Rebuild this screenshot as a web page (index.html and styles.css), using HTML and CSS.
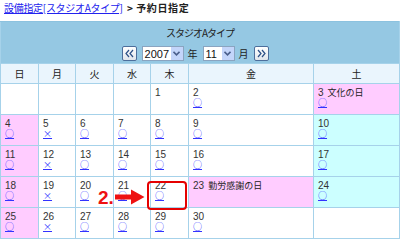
FILE: index.html
```html
<!DOCTYPE html>
<html lang="ja">

<head>
  <meta charset="UTF-8" />
  <title>予約日指定</title>
  <link rel="stylesheet" href="styles.css">
</head>

<body>
  <div class="crumb"><a href="#">設備指定[スタジオAタイプ]</a> <b>&gt; 予約日指定</b></div>

  <div class="cal">
    <table>
      <colgroup>
        <col class="c-sun">
        <col class="c-mon">
        <col class="c-tue">
        <col class="c-wed">
        <col class="c-thu">
        <col class="c-fri">
        <col class="c-sat">
      </colgroup>
      <thead>
        <tr>
          <th colspan="7" class="head">
            <div class="title">スタジオAタイプ</div>
            <div class="nav">
              <span class="btn">
                <svg width="9" height="9" viewBox="0 0 9 9"><path d="M4 1 L1 4.5 L4 8 M8 1 L5 4.5 L8 8" fill="none" stroke="#2b4f86" stroke-width="1.2"/></svg>
              </span>
              <span class="sel sel-year">2007<span class="drop"><svg width="7" height="5" viewBox="0 0 7 5"><path d="M0.5 0.8 L3.5 3.8 L6.5 0.8" fill="none" stroke="#4b5f8c" stroke-width="1.6"/></svg></span></span>
              <span class="unit">年</span>
              <span class="sel sel-month">11<span class="drop"><svg width="7" height="5" viewBox="0 0 7 5"><path d="M0.5 0.8 L3.5 3.8 L6.5 0.8" fill="none" stroke="#4b5f8c" stroke-width="1.6"/></svg></span></span>
              <span class="unit">月</span>
              <span class="btn">
                <svg width="9" height="9" viewBox="0 0 9 9"><path d="M1 1 L4 4.5 L1 8 M5 1 L8 4.5 L5 8" fill="none" stroke="#2b4f86" stroke-width="1.2"/></svg>
              </span>
            </div>
          </th>
        </tr>
        <tr class="dow">
          <th>日</th><th>月</th><th>火</th><th>水</th><th>木</th><th>金</th><th>土</th>
        </tr>
      </thead>
      <tbody>
        <tr>
          <td></td><td></td><td></td><td></td>
          <td><span class="d">1</span></td>
          <td><span class="d">2</span><a class="ok" href="#">○</a></td>
          <td class="hol"><span class="d">3<span class="hname">文化の日</span></span><a class="ok" href="#">○</a></td>
        </tr>
        <tr>
          <td class="sun"><span class="d">4</span><a class="ok" href="#">○</a></td>
          <td><span class="d">5</span><a class="ng" href="#">×</a></td>
          <td><span class="d">6</span><a class="ok" href="#">○</a></td>
          <td><span class="d">7</span><a class="ok" href="#">○</a></td>
          <td><span class="d">8</span><a class="ok" href="#">○</a></td>
          <td><span class="d">9</span><a class="ok" href="#">○</a></td>
          <td class="sat"><span class="d">10</span><a class="ok" href="#">○</a></td>
        </tr>
        <tr>
          <td class="sun"><span class="d">11</span><a class="ok" href="#">○</a></td>
          <td><span class="d">12</span><a class="ng" href="#">×</a></td>
          <td><span class="d">13</span><a class="ok" href="#">○</a></td>
          <td><span class="d">14</span><a class="ok" href="#">○</a></td>
          <td><span class="d">15</span><a class="ok" href="#">○</a></td>
          <td><span class="d">16</span><a class="ok" href="#">○</a></td>
          <td class="sat"><span class="d">17</span><a class="ok" href="#">○</a></td>
        </tr>
        <tr>
          <td class="sun"><span class="d">18</span><a class="ok" href="#">○</a></td>
          <td><span class="d">19</span><a class="ng" href="#">×</a></td>
          <td><span class="d">20</span><a class="ok" href="#">○</a></td>
          <td><span class="d">21</span><a class="ok" href="#">○</a></td>
          <td><span class="d">22</span><a class="ok" href="#">○</a></td>
          <td class="hol"><span class="d">23<span class="hname">勤労感謝の日</span></span></td>
          <td class="sat"><span class="d">24</span><a class="ok" href="#">○</a></td>
        </tr>
        <tr>
          <td class="sun"><span class="d">25</span><a class="ok" href="#">○</a></td>
          <td><span class="d">26</span><a class="ng" href="#">×</a></td>
          <td><span class="d">27</span><a class="ok" href="#">○</a></td>
          <td><span class="d">28</span><a class="ok" href="#">○</a></td>
          <td><span class="d">29</span><a class="ok" href="#">○</a></td>
          <td><span class="d">30</span><a class="ok" href="#">○</a></td>
          <td></td>
        </tr>
      </tbody>
    </table>

    <!-- 注釈 -->
    <div class="step">2.</div>
    <svg class="arrow" width="30" height="16" viewBox="0 0 30 16">
      <path d="M0 5.5 H16 V0.5 L29.5 8 L16 15.5 V10.5 H0 Z" fill="#ee1111"/>
    </svg>
    <div class="pick"></div>
  </div>
</body>

</html>
```

FILE: styles.css
```css
body {
  margin: 0;
  padding: 0;
  font-family: "Liberation Sans", "Noto Sans CJK JP", sans-serif;
  font-size: 10px;
  color: #333;
  background: #fff;
}

.crumb {
  height: 21px;
  line-height: 16px;
  padding-left: 4px;
  font-family: "Noto Sans CJK JP", sans-serif;
  font-size: 10px;
}

.crumb a {
  color: #2222ee;
  letter-spacing: -0.3px;
}

.crumb b {
  margin-left: 2px;
  color: #222;
  font-size: 10px;
  letter-spacing: 0.6px;
}

.cal {
  position: relative;
  width: 400px;
}

table {
  border-collapse: collapse;
  table-layout: fixed;
  width: 399px;
}

.c-sun { width: 38px; }
.c-mon { width: 37px; }
.c-tue { width: 38px; }
.c-wed { width: 37px; }
.c-thu { width: 38px; }
.c-fri { width: 125px; }
.c-sat { width: 86px; }

th,
td {
  border: 1px solid #a6d2ea;
}

.head {
  background: #95c8e3;
  padding: 0;
  font-weight: normal;
  border-top-color: #8cc2df;
}

.title {
  height: 21px;
  line-height: 21px;
  text-align: center;
  font-family: "Noto Sans CJK JP", sans-serif;
  font-size: 10px;
  letter-spacing: -1px;
  color: #222;
}

.nav {
  height: 20px;
  display: flex;
  justify-content: center;
  align-items: flex-start;
  padding-top: 3px;
  padding-right: 10px;
  box-sizing: border-box;
  gap: 5px;
}

.btn {
  width: 15px;
  height: 15px;
  box-sizing: border-box;
  border: 1px solid #4d6f9c;
  border-radius: 2px;
  background: linear-gradient(#ffffff, #dfe5ec);
  display: flex;
  align-items: center;
  justify-content: center;
}

.sel {
  height: 15px;
  box-sizing: border-box;
  border: 1px solid #8aa4c0;
  background: #fff;
  display: flex;
  align-items: center;
  justify-content: space-between;
  padding-left: 2px;
  font-size: 11px;
  color: #111;
}

.sel-year { width: 42px; }
.sel-month { width: 32px; }

.drop {
  width: 12px;
  height: 13px;
  background: #c3d5fa;
  display: flex;
  align-items: center;
  justify-content: center;
}

.unit {
  line-height: 15px;
  font-family: "Noto Sans CJK JP", sans-serif;
  font-size: 10px;
  color: #222;
  margin: 0 0 0 -1px;
}

.dow th {
  height: 19px;
  padding: 0;
  background: #eaf5fd;
  font-family: "Noto Sans CJK JP", sans-serif;
  font-weight: normal;
  font-size: 10px;
  color: #222;
}

tbody tr {
  height: 31px;
}

tbody td {
  vertical-align: top;
  padding: 4px 3px 0 4px;
  background: #fff;
}

.d {
  display: block;
  height: 9px;
  line-height: 9px;
  white-space: nowrap;
}

td.sun,
td.hol {
  background: #ffccff;
}

td.sat {
  background: #ccffff;
}

.hname {
  margin-left: 4px;
  font-family: "Noto Sans CJK JP", sans-serif;
  font-size: 9px;
  color: #222;
}

.ok,
.ng {
  display: inline-block;
  margin-top: 1px;
  height: 9px;
  line-height: 8px;
  color: #3333ff;
  text-decoration: underline;
  font-family: "Noto Sans CJK JP", sans-serif;
  font-size: 9px;
}

.step {
  position: absolute;
  left: 98px;
  top: 167px;
  font-size: 19px;
  line-height: 19px;
  font-weight: bold;
  color: #ee1111;
}

.arrow {
  position: absolute;
  left: 115px;
  top: 168px;
}

.pick {
  position: absolute;
  left: 147px;
  top: 160px;
  width: 40px;
  height: 29px;
  box-sizing: border-box;
  border: 2px solid #e50000;
  border-radius: 4px;
}
```
